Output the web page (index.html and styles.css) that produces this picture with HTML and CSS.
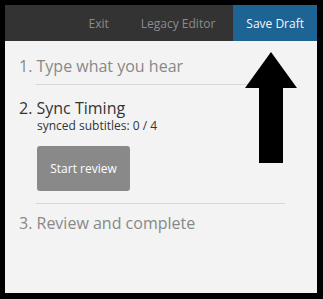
FILE: index.html
```html
<!DOCTYPE html>
<html lang="en">
<head>
  <meta charset="UTF-8">
  <title>Subtitle editor</title>
  <link rel="stylesheet" href="styles.css">
</head>
<body>
  <div class="panel">
    <nav class="topbar">
      <a class="top-link">Exit</a>
      <a class="top-link">Legacy Editor</a>
      <a class="top-link save">Save Draft</a>
    </nav>
    <div class="steps">
      <h2 class="step-title done">1. Type what you hear</h2>
      <hr class="divider first">
      <h2 class="step-title active">2. Sync Timing</h2>
      <div class="step-body">
        <p class="synced">synced subtitles: 0 / 4</p>
        <button class="review-btn">Start review</button>
      </div>
      <hr class="divider second">
      <h2 class="step-title todo">3. Review and complete</h2>
    </div>
    <svg class="pointer" width="52" height="111" viewBox="0 0 52 111">
      <polygon points="26,0 52,36 38,36 38,111 14,111 14,36 0,36" fill="#000"/>
    </svg>
  </div>
</body>
</html>
```

FILE: styles.css
```css
body {
  margin: 0;
  background-color: #000;
  font-family: 'Open Sans', sans-serif;
}
.panel {
  position: relative;
  margin: 5px 6px 6px 5px;
  height: 288px;
  background-color: #f3f3f3;
}
.topbar {
  display: flex;
  justify-content: flex-end;
  align-items: center;
  height: 36px;
  background-color: #333;
}
.top-link {
  padding: 0 16px;
  font-size: 12px;
  color: #8c8c8c;
}
.top-link.save {
  display: flex;
  align-items: center;
  align-self: stretch;
  padding: 0 13px;
  margin-left: 2px;
  background-color: #1d6394;
  color: #f4f8fb;
}
.steps {
  padding: 15px 32px 0 14px;
}
.step-title {
  margin: 0;
  font-size: 16px;
  font-weight: 400;
  line-height: 20px;
}
.step-title.done, .step-title.todo {
  color: #888;
}
.step-title.active {
  color: #333;
}
.divider {
  margin: 0 0 0 17px;
  border: none;
  border-top: 1px solid #d8d8d8;
}
.divider.first {
  margin-top: 8px;
  margin-bottom: 13px;
}
.divider.second {
  margin-top: 12px;
  margin-bottom: 9px;
}
.step-body {
  padding-left: 18px;
}
.synced {
  margin: 0;
  font-size: 12px;
  line-height: 16px;
  color: #333;
}
.review-btn {
  display: block;
  margin-top: 12px;
  width: 93px;
  height: 45px;
  border: none;
  border-radius: 3px;
  background-color: #898989;
  color: #fff;
  font-family: 'Open Sans', sans-serif;
  font-size: 12px;
}
.pointer {
  position: absolute;
  left: 240px;
  top: 47px;
}
```
